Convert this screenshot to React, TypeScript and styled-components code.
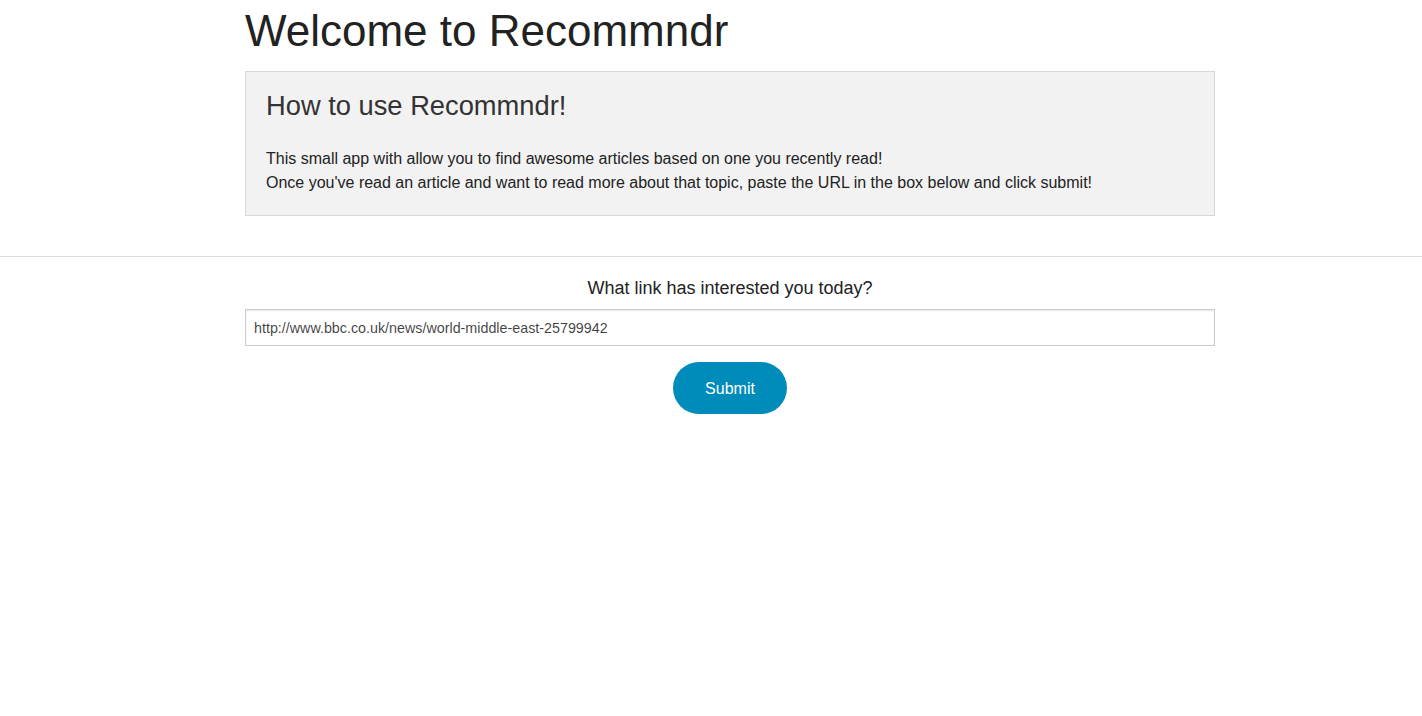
import { FC, useState } from "react";
import styled, { createGlobalStyle } from "styled-components";

const GlobalStyle = createGlobalStyle`
  html, body {
    margin: 0;
    padding: 0;
    background: #ffffff;
    color: #222222;
    font-family: "Liberation Sans", Arial, Helvetica, sans-serif;
  }
  * {
    box-sizing: border-box;
  }
`;

const App: FC = () => {
  const [url, setUrl] = useState(
    "http://www.bbc.co.uk/news/world-middle-east-25799942"
  );

  return (
    <>
      <GlobalStyle />
      <Row>
        <Title>Welcome to Recommndr</Title>
        <Panel>
          <PanelTitle>How to use Recommndr!</PanelTitle>
          <PanelText>
            This small app with allow you to find awesome articles based on one
            you recently read!
            <br />
            Once you've read an article and want to read more about that topic,
            paste the URL in the box below and click submit!
          </PanelText>
        </Panel>
      </Row>
      <Divider />
      <Row>
        <Form onSubmit={(e) => e.preventDefault()}>
          <Label htmlFor="link">What link has interested you today?</Label>
          <UrlInput
            id="link"
            type="text"
            value={url}
            onChange={(e) => setUrl(e.target.value)}
          />
          <SubmitButton type="submit">Submit</SubmitButton>
        </Form>
      </Row>
    </>
  );
};

export default App;

const Row = styled.div`
  width: 970px;
  margin-left: calc(50% - 466px);
`;

const Title = styled.h1`
  font-size: 44px;
  font-weight: normal;
  line-height: 62px;
  margin: 0 0 9px;
  color: #222222;
`;

const Panel = styled.div`
  background-color: #f2f2f2;
  border: 1px solid #d8d8d8;
  padding: 20px;
`;

const PanelTitle = styled.h3`
  font-size: 27.3px;
  font-weight: normal;
  line-height: 28px;
  margin: 0 0 27px;
  color: #333333;
`;

const PanelText = styled.p`
  font-size: 16px;
  line-height: 24px;
  margin: 0;
  color: #222222;
`;

const Divider = styled.hr`
  border: 0;
  border-top: 1px solid #dddddd;
  margin: 40px 0 19px;
  height: 0;
`;

const Form = styled.form`
  display: flex;
  flex-direction: column;
  align-items: center;
`;

const Label = styled.label`
  font-size: 18px;
  line-height: 24px;
  color: #222222;
  margin-bottom: 9px;
`;

const UrlInput = styled.input`
  width: 100%;
  height: 37px;
  padding: 8px;
  font-family: "Liberation Sans", Arial, sans-serif;
  font-size: 14.3px;
  color: rgba(0, 0, 0, 0.75);
  background: #ffffff;
  border: 1px solid #cccccc;
  box-shadow: inset 0 1px 2px rgba(0, 0, 0, 0.1);
  outline: none;
  margin: 0 0 16px;
`;

const SubmitButton = styled.button`
  height: 52px;
  background-color: #008cba;
  color: #ffffff;
  border: none;
  border-radius: 1000px;
  padding: 1px 32px 0;
  font-family: "Liberation Sans", Arial, sans-serif;
  font-size: 16px;
  line-height: normal;
  cursor: pointer;

  :hover {
    background-color: #007095;
  }
`;
